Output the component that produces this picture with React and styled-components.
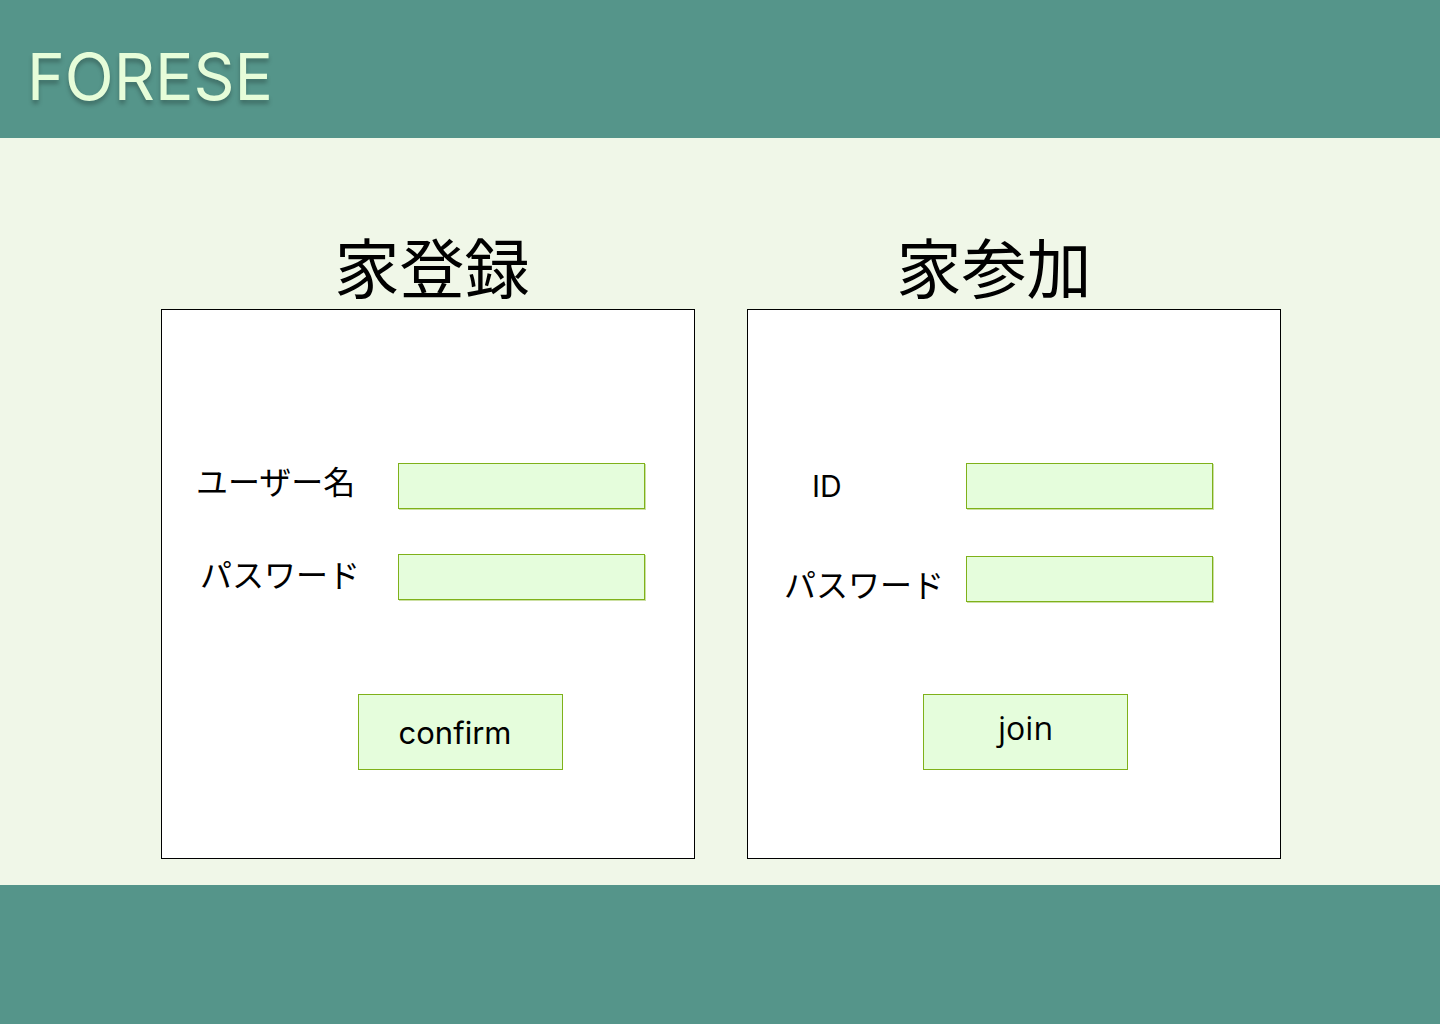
import React from 'react';
import styled, { createGlobalStyle, css } from 'styled-components';

const GlobalStyle = createGlobalStyle`
  html, body {
    margin: 0;
    padding: 0;
  }
  body {
    font-family: Inter, "Noto Sans", "Noto Sans CJK JP", sans-serif;
    color: #000000;
  }
`;

const App = () => {
  return (
    <Page>
      <GlobalStyle />
      <Header>
        <Logo>FORESE</Logo>
      </Header>
      <Main>
        <Panel>
          <PanelTitle shift={4}>家登録</PanelTitle>
          <Card>
            <Form labelWidth={236} rowGap={45}>
              <Label indent={34} lift={6}>ユーザー名</Label>
              <Field />
              <Label indent={38} lift={4}>パスワード</Label>
              <Field />
            </Form>
            <ButtonRow offset={196}>
              <ActionButton>confirm</ActionButton>
            </ButtonRow>
          </Card>
        </Panel>
        <Panel>
          <PanelTitle shift={-20}>家参加</PanelTitle>
          <Card>
            <Form labelWidth={218} rowGap={47}>
              <Label indent={64} latin>ID</Label>
              <Field />
              <Label indent={36} lift={-4}>パスワード</Label>
              <Field />
            </Form>
            <ButtonRow offset={175} rowGap={92}>
              <ActionButton join>join</ActionButton>
            </ButtonRow>
          </Card>
        </Panel>
      </Main>
      <Footer />
    </Page>
  );
};

const Page = styled.div`
  display: flex;
  flex-direction: column;
  min-height: 100vh;
  background-color: #f0f7e8;
`;

const Header = styled.header`
  height: 138px;
  background-color: #55958a;
  display: flex;
  align-items: center;
  padding-left: 27px;
  box-sizing: border-box;
`;

const Logo = styled.div`
  font-family: Inter, "Liberation Sans", sans-serif;
  font-size: 64px;
  font-weight: 400;
  color: #e6fdd9;
  text-shadow: 0 4px 4px rgba(0, 0, 0, 0.25);
  margin-top: 14px;
`;

const Main = styled.main`
  flex: 1 0 auto;
  display: flex;
  justify-content: center;
  gap: 52px;
  padding: 90px 0 26px 2px;
`;

const Panel = styled.section`
  display: flex;
  flex-direction: column;
  align-items: center;
`;

const PanelTitle = styled.h2`
  margin: 0 0 4px;
  height: 77px;
  line-height: 74px;
  font-family: "Noto Sans CJK JP", sans-serif;
  font-size: 65px;
  font-weight: 400;
  transform: translateX(${props => props.shift}px);
`;

const Card = styled.div`
  width: 534px;
  height: 550px;
  box-sizing: border-box;
  border: 1px solid #000000;
  background-color: #ffffff;
  padding-top: 153px;
`;

const Form = styled.div`
  display: grid;
  grid-template-columns: ${props => props.labelWidth}px 247px;
  row-gap: ${props => props.rowGap}px;
  align-items: center;
`;

const Label = styled.label`
  font-family: "Noto Sans CJK JP", sans-serif;
  font-size: 32px;
  line-height: 46px;
  padding-left: ${props => props.indent}px;
  position: relative;
  top: ${props => -(props.lift || 0)}px;
  white-space: nowrap;

  ${props =>
    props.latin &&
    css`
      font-family: Inter, sans-serif;
      font-size: 30px;
    `}
`;

const Field = styled.input`
  width: 247px;
  height: 46px;
  box-sizing: border-box;
  margin: 0;
  border: 1px solid #7fb11a;
  background-color: #e5fddc;
  box-shadow: 1px 1px 0 rgba(127, 177, 26, 0.4);
  outline: none;
`;

const ButtonRow = styled.div`
  padding-left: ${props => props.offset}px;
  margin-top: ${props => props.rowGap || 94}px;
`;

const ActionButton = styled.button`
  width: 205px;
  height: 76px;
  box-sizing: border-box;
  border: 1px solid #7fb11a;
  background-color: #e5fddc;
  color: #000000;
  font-family: Inter, sans-serif;
  font-size: 31px;
  padding: 0 11px 0 0;
  cursor: pointer;

  ${props =>
    props.join &&
    css`
      font-family: "Open Sans", "Noto Sans", sans-serif;
      padding: 0 0 10px 0;
      font-size: 32px;
    `}
`;

const Footer = styled.footer`
  height: 139px;
  background-color: #55958a;
`;

export default App;
